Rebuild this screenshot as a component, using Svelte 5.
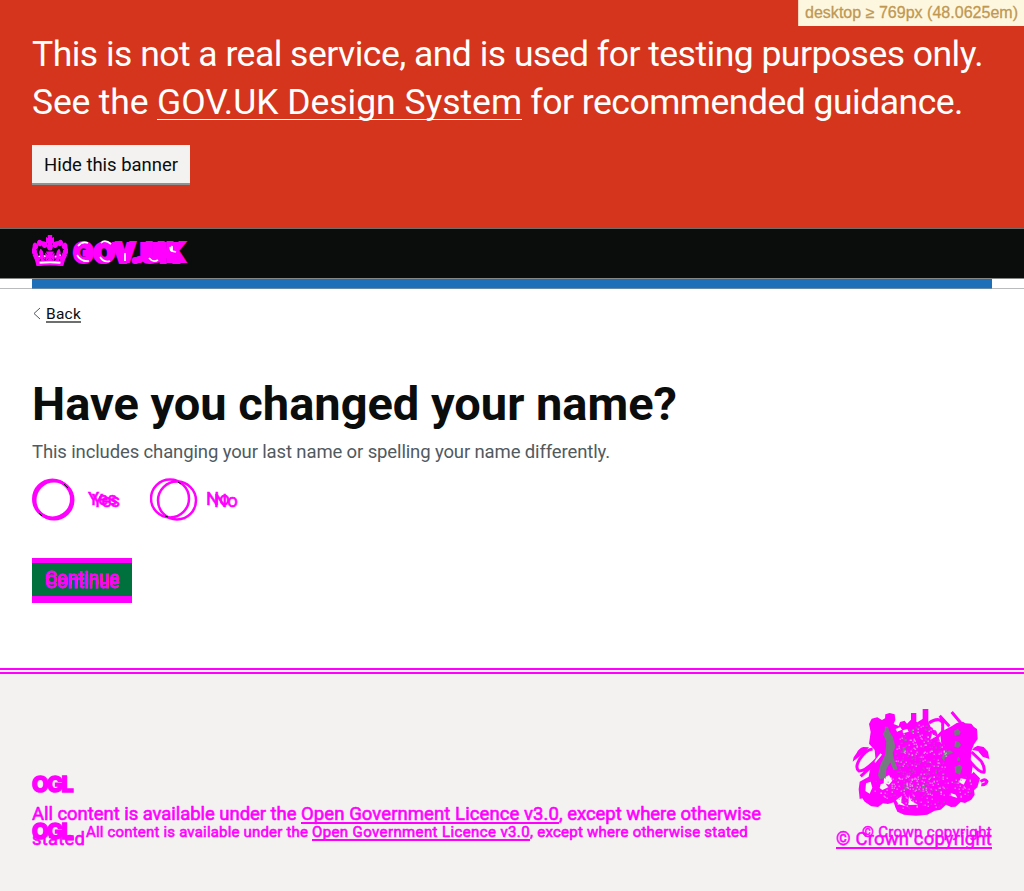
<script>
  // Spreads the remaining space over the letters so that a label fills its width.
  function fit(node, width) {
    node.style.letterSpacing = '0px';
    const natural = node.getBoundingClientRect().width;
    node.style.letterSpacing = (width - natural) / node.textContent.length + 'px';
  }
  const crown = 'M25 30.2c3.5 1.5 7.7-.2 9.1-3.7 1.5-3.6-.2-7.8-3.9-9.2-3.6-1.4-7.6.3-9.1 3.9-1.4 3.5.3 7.5 3.9 9zM9 39.5c3.6 1.5 7.8-.2 9.2-3.7 1.5-3.6-.2-7.8-3.9-9.1-3.6-1.5-7.6.2-9.1 3.8-1.4 3.5.3 7.5 3.8 9zM4.4 57.2c3.5 1.5 7.7-.2 9.1-3.8 1.5-3.6-.2-7.7-3.9-9.1-3.5-1.5-7.6.3-9.1 3.8-1.4 3.5.3 7.6 3.9 9.1zm38.3-21.4c3.5 1.5 7.7-.2 9.1-3.8 1.5-3.6-.2-7.7-3.9-9.1-3.6-1.5-7.6.3-9.1 3.8-1.3 3.6.4 7.7 3.9 9.1zm64.4-5.6c-3.6 1.5-7.8-.2-9.1-3.7-1.5-3.6.2-7.8 3.8-9.2 3.6-1.4 7.7.3 9.2 3.9 1.3 3.5-.4 7.5-3.9 9zm15.9 9.3c-3.6 1.5-7.7-.2-9.1-3.7-1.5-3.6.2-7.8 3.7-9.1 3.6-1.5 7.7.2 9.2 3.8 1.5 3.5-.3 7.5-3.8 9zm4.7 17.7c-3.6 1.5-7.8-.2-9.2-3.8-1.5-3.6.2-7.7 3.9-9.1 3.6-1.5 7.7.3 9.2 3.8 1.3 3.5-.4 7.6-3.9 9.1zM89.3 35.8c-3.6 1.5-7.8-.2-9.2-3.8-1.4-3.6.2-7.7 3.9-9.1 3.6-1.5 7.7.3 9.2 3.8 1.4 3.6-.3 7.7-3.9 9.1zM69.7 17.7l8.9 4.7V9.3l-8.9 2.8c-.2-.3-.5-.6-.9-.9L72.4 0H59.6l3.5 11.2c-.3.3-.6.5-.9.9l-8.8-2.8v13.1l8.8-4.7c.3.3.6.7.9.9l-5 15.4v.1c-.2.8-.4 1.6-.4 2.4 0 4.1 3.1 7.5 7 8.1h.2c.3 0 .7.1 1 .1.4 0 .7 0 1-.1h.2c4-.6 7.1-4.1 7.1-8.1 0-.8-.1-1.7-.4-2.4V34l-5.1-15.4c.4-.2.7-.6 1-.9zM66 92.8c16.9 0 32.8 1.1 47.1 3.2 4-16.9 8.9-26.7 14-33.5l-9.6-3.4c1 4.9 1.1 7.2 0 10.2-1.5-1.4-3-4.3-4.2-8.7L108.6 76c2.8-2 5-3.2 7.5-3.3-4.4 9.4-10 11.9-13.6 11.2-4.3-.8-6.3-4.6-5.6-7.9 1-4.7 5.7-5.9 8-.5 4.3-8.7-3-11.4-7.6-8.8 7.1-7.2 7.9-13.5 2.1-21.1-8 6.1-8.1 12.3-4.5 20.8-4.7-5.4-12.1-2.5-9.5 6.2 3.4-5.2 7.9-2 7.2 3.1-.6 4.3-6.4 7.8-13.5 7.2-10.3-.9-10.9-8-11.2-13.8 2.5-.5 7.1 1.8 11 7.3L80.2 60c-4.1 4.4-8 5.3-12.3 5.4 1.4-4.4 8-11.6 8-11.6H55.5s6.4 7.2 7.9 11.6c-4.2-.1-8-1-12.3-5.4l1.4 16.4c3.9-5.5 8.5-7.7 10.9-7.3-.3 5.8-.9 12.8-11.1 13.8-7.2.6-12.9-2.9-13.5-7.2-.7-5 3.8-8.3 7.1-3.1 2.7-8.7-4.6-11.6-9.4-6.2 3.7-8.5 3.6-14.7-4.6-20.8-5.8 7.6-5 13.9 2.2 21.1-4.7-2.6-11.9.1-7.7 8.8 2.3-5.5 7.1-4.2 8.1.5.7 3.3-1.3 7.1-5.7 7.9-3.5.7-9-1.8-13.5-11.2 2.5.1 4.7 1.3 7.5 3.3l-4.7-15.4c-1.2 4.4-2.7 7.2-4.3 8.7-1.1-3-.9-5.3 0-10.2l-9.5 3.4c5 6.9 9.9 16.7 14 33.5 14.8-2.1 30.8-3.2 47.7-3.2z';
  // Small flecks over the shield of the coat of arms.
  let seed = 11;
  const rnd = () => (seed = (seed * 16807) % 2147483647) / 2147483647;
  const flecks = Array.from({ length: 330 }, () => {
    const a = rnd() * Math.PI * 2, r = Math.sqrt(rnd());
    return { x: Math.round((240 + Math.cos(a) * r * 78) / 3) * 3, y: Math.round((180 + Math.sin(a) * r * 105) / 3) * 3, c: rnd() > .38 ? '#7b8082' : '#f3f2f1' };
  });
  const sideFlecks = Array.from({ length: 230 }, () => ({
    x: Math.round((100 + rnd() * 290) / 3) * 3, y: Math.round((230 + rnd() * 95) / 3) * 3, c: rnd() > .65 ? '#7b8082' : '#f3f2f1'
  })).filter(f => f.y < 295 || (f.x > 170 && f.x < 310));
</script>

<div class="page">
  <div class="badge"><span use:fit={213}>desktop ≥ 769px (48.0625em)</span></div>
  <section class="banner">
    <p><span use:fit={951}>This is not a real service, and is used for testing purposes only.</span></p>
    <p><span use:fit={125}>See the&nbsp;</span><a href="#ds" use:fit={365}>GOV.UK Design System</a><span use:fit={441}>&nbsp;for recommended guidance.</span></p>
    <button class="hide"><span use:fit={134}>Hide this banner</span></button>
  </section>

  <header>
    <svg class="crown" viewBox="0 0 132 97" width="36" height="31" preserveAspectRatio="none">
      <path d={crown} fill="#f0f" stroke="#f0f" stroke-width="4" />
      <path d="M22 26Q43 18 55 36M110 26Q89 18 77 36M9 34Q3 44 8 56M123 34Q129 44 124 56" fill="none" stroke="#f0f" stroke-width="10" />
      <path d={crown} fill="#f0f" stroke="#f0f" stroke-width="4" transform="translate(3 5) scale(.95 .93)" />
      <path d="M22 85q44-4 88 0l-2 8q-42-4-84 0z" fill="#f0f" />
      <path d="M28 87q38-3 76 0" fill="none" stroke="#fff" stroke-width="6" />
      <path d="M24 67h5M44 66h6M84 68h5M101 63h5" stroke="#fff" stroke-width="4" />
    </svg>
    <div class="logo">
      <span class="mark a" use:fit={106}>GOV.UK</span>
      <span class="mark b" use:fit={114}>GOV.UK</span>
      <svg class="glint" width="114" height="30" viewBox="0 0 114 30"><path d="M6 8q4-5 10-3M5 17q4 7 12 6M39 6q-6-5-10-1M28 19q4 6 10 4M53 15v8M77 20q4 5 9 2M98 9l1 4 1-5v5l4 1" fill="none" stroke="#fff" stroke-width="1.700" /></svg>
    </div>
  </header>
  <div class="strip"><div></div></div>

  <main>
    <div class="back"><svg width="9" height="13" viewBox="0 0 9 13"><path d="M8 1L2 6.500 8 12" fill="none" stroke="#505a5f" stroke-width="1" /></svg><a href="#back" use:fit={35}>Back</a></div>
    <h1><span use:fit={645}>Have you changed your name?</span></h1>
    <p class="hint"><span use:fit={578}>This includes changing your last name or spelling your name differently.</span></p>
    <div class="radios">
      <svg width="44" height="46" viewBox="0 0 44 46" fill="none" stroke="#f0f"><circle cx="20.500" cy="22" r="19" stroke-width="3" /><circle cx="22" cy="23" r="19" stroke-width="3" /><path d="M32 7l4 4M7 36l3 3" stroke="#0b0c0c" /></svg>
      <div class="label yes"><span use:fit={29}>Yes</span><span class="shift" use:fit={27}>Yes</span></div>
      <svg width="50" height="46" viewBox="0 0 50 46" fill="none" stroke="#f0f"><circle cx="20" cy="21.500" r="19" stroke-width="2.500" /><circle cx="27" cy="23.500" r="19" stroke-width="2.500" /><path d="M28 5l3 2M15 39l3 1" stroke="#0b0c0c" /></svg>
      <div class="label no"><span use:fit={24}>No</span><span class="shift" use:fit={24}>No</span></div>
    </div>
    <button class="continue"><span class="first" use:fit={74}>Continue</span><span class="ghost" use:fit={74}>Continue</span></button>
  </main>

  <footer>
    <div class="licence">
      <b class="ogl"><span use:fit={40}>OGL</span></b>
      <div class="large"><span use:fit={269}>All content is available under the&nbsp;</span><a href="#ogl" use:fit={258}>Open Government Licence v3.0</a><span use:fit={202}>, except where otherwise</span><br /><span use:fit={53}>stated</span></div>
      <div class="small"><b class="ogl"><span use:fit={40}>OGL</span></b><div><span use:fit={226}>All content is available under the&nbsp;</span><a href="#ogl" use:fit={218}>Open Government Licence v3.0</a><span use:fit={218}>, except where otherwise stated</span></div></div>
    </div>
    <div class="copyright">
      <svg width="140" height="110" viewBox="34 25 420 330">
        <g fill="none" stroke="#f0f" stroke-width="9" stroke-linejoin="round">
          <path d="M108 178Q72 216 55 214Q42 205 56 180Q75 150 96 148M60 230L110 184M384 180Q415 220 430 218Q434 203 421 184L393 157M420 246Q432 235 439 245Q435 257 422 255M297 48L326 80M333 37L363 73M265 70Q292 51 306 68L306 96L286 116" />
        </g>
        <path d="M36 186l3-13 9-13Q54 146 68 142l17 1-10 12-14 12zM446 178l-20-7-14-17-18-3q5-9 17-13l18 4 13 14zM211 73V40h16v33zM246 68V28h17v41z" fill="#f0f" />
        <path d="M85 73L93 57 110 53 124 61 133 56 134 44 147 40 162 44 164 60 159 73 174 79 178 67 192 63 199 72 210 61 230 68 249 56 264 68 270 82 285 88 292 110 302 133 299 106 310 92 334 79 348 70 367 66 374 71 392 72 400 82 409 88 411 118 400 134 393 151 390 180 400 218 418 236 410 263 400 272 402 285 392 300 373 310 360 307 345 321 331 322 316 315 300 330 282 333 260 345 226 348 190 345 170 336 164 323 159 308 142 313 127 311 112 322 92 320 72 306 65 296 57 298 54 269 57 246 84 231 88 210 105 184 102 151 85 132 90 97Z" fill="#f0f" />
        <g fill="#f3f2f1"><path d="M76 251l14-5 5 18-8 18-13-8zM130 235l15-9 10 17-10 12-16-6zM120 254l13-5 10 14-18 8-8-6zM166 302l18-14-3 20 15 12-22-6zM205 288l7 16 20 11-29 1zM360 236l17 3-8 16-14-7zM330 280l15 5 5 10-18-6zM274 73l21-8 7 17-11 12-14-4zM102 184l17-23 5 4-21 26zM287 110l-18 10 5-16zM395 203l6 12-8 8zM165 88l14-6 5 8-15 6zM186 92l14-4 4 8-17 5z" /></g>
        <g fill="#747c80"><path d="M133 81h9l4 14 11 18 7 28-8 18 3 16 12 34-12 3-10-24-12 21-2 25-17 5-6-12 6-29 16-34 3-39-10-22 5-10zM186 142h9v12h-9zM340 93l12-5 8 8-4 10-14 2zM344 124l12 4 5 8-8 9-12-4zM310 158l18-6 9 7-18 8-10 15-5-6zM342 202l15-7 8 7-7 23-14-6zM191 118h7v7h-7zM213 90h4v9h-4zM244 255h9v11h-9zM192 261h9v8h-9zM352 171l6 5-2 9-7-3z" /></g>
        {#each [...flecks, ...sideFlecks] as f}<rect x={f.x} y={f.y} width="3" height="3" fill={f.c} />{/each}
      </svg>
      <div class="copy"><span use:fit={130}>© Crown copyright</span><span class="copylarge" use:fit={156}>© Crown copyright</span></div>
    </div>
  </footer>
</div>

<style>
  :global(body) { margin: 0; background: #fff; }
  * { box-sizing: border-box; }
  p, h1 { margin: 0; }
  span, a { display: inline-block; white-space: nowrap; }
  .page { width: 1024px; height: 891px; overflow: hidden; position: relative; display: flex; flex-direction: column; font-family: Roboto, sans-serif; color: #0b0c0c; }
  .badge { position: absolute; right: 0; top: 0; width: 226px; height: 26px; padding: 0 6px; background: #fef7e0; border-left: 1px solid #f5d5bd; color: #bf9853; font: 16px/26px "Liberation Sans", Arial, sans-serif; -webkit-text-stroke: .3px; }
  .banner { height: 228px; padding: 30px 32px 0; background: #d4351c; color: #fff; font-size: 35.500px; line-height: 48px; }
  .banner p { height: 48px; white-space: nowrap; display: flex; }
  .banner a { color: #fff; height: 42px; border-bottom: 1px solid #fff; text-decoration: none; }
  .hide { display: block; margin-top: 19px; width: 158px; height: 40px; border: 0; padding: 1px 0 0 12px; text-align: left; background: #f3f2f1; border-bottom: 2px solid #929191; font: 18.500px/38px Roboto, sans-serif; color: #0b0c0c; }
  header { height: 51px; background: #0b0c0c; border-top: 1px solid #6c6d6d; border-bottom: 1px solid #858686; padding: 6px 32px; display: flex; gap: 4px; }
  .crown { flex: none; display: block; }
  .logo { position: relative; width: 114px; height: 31px; font: 800 27px/31px "Inter", sans-serif; }
  .mark { position: absolute; left: 1px; top: 3px; color: #f0f; -webkit-text-stroke: 2.200px #f0f; }
  .mark.b { top: 2px; left: 1px; }
  .glint { position: absolute; left: 0; top: 3px; }
  .strip { height: 10px; padding: 0 32px; border-bottom: 1px solid #b9bbbc; }
  .strip div { height: 10px; background: #1d70b8; border-bottom: 1px solid #6689a9; }
  main { height: 379px; padding: 0 32px; }
  .back { display: flex; gap: 5px; padding-top: 18px; font-size: 15.500px; line-height: 18px; height: 38px; }
  .back a { height: 17px; line-height: 17px; border-bottom: 2px solid #6d6e6e; color: #0b0c0c; text-decoration: none; margin-top: -1px; }
  h1 { padding-top: 52px; height: 113px; font-size: 47px; font-weight: 700; line-height: 50px; }
  .hint { font-size: 18.500px; line-height: 24px; color: #505a5f; height: 37px; white-space: nowrap; }
  .radios { display: flex; height: 81px; color: #f0f; font-size: 18.500px; }
  .radios svg { flex: none; }
  .label { position: relative; height: 46px; line-height: 44px; -webkit-text-stroke: .6px #f0f; }
  .yes { width: 74px; padding-left: 12px; }
  .no { padding-left: 6px; }
  .shift { position: absolute; left: 16px; top: 2px; }
  .no .shift { left: 14px; }
  .continue { display: block; position: relative; width: 100px; height: 45px; padding: 0; border: 0; border-top: 5px solid #f0f; border-bottom: 7px solid #f0f; background: #00703c; color: #f0f; font: 18.500px/31px Roboto, sans-serif; -webkit-text-stroke: .8px #f0f; }
  .first { position: relative; top: -1px; }
  .ghost { position: absolute; left: 13px; top: 4px; }
  footer { height: 223px; border-top: 2px solid #f0f; background: #f3f2f1; padding: 0 32px; position: relative; display: flex; justify-content: space-between; }
  footer::before { content: ""; position: absolute; left: 0; right: 0; top: 2px; height: 2px; background: #f0f; }
  .licence { position: relative; width: 740px; padding-top: 102px; color: #f0f; -webkit-text-stroke: .6px #f0f; }
  .ogl { display: block; height: 29px; font: 800 21.500px/24px "Inter", sans-serif; -webkit-text-stroke: 1.500px #f0f; }
  .large { font-size: 18.500px; line-height: 27px; white-space: nowrap; margin-bottom: 0; line-height: 25px; padding-top: 1px; }
  footer a { color: #f0f; height: 22px; border-bottom: 2px solid #f0f; text-decoration: none; }
  .large a { vertical-align: top; }
  .small { position: absolute; left: 0; top: 149px; display: flex; gap: 14px; font-size: 15px; line-height: 26px; white-space: nowrap; }
  .small a { height: 22px; vertical-align: top; }
  .copyright { position: relative; width: 156px; padding-top: 38px; color: #f0f; display: flex; flex-direction: column; align-items: flex-end; -webkit-text-stroke: .5px #f0f; }
  .copyright svg { display: block; }
  .copy { position: relative; width: 156px; text-align: right; font-size: 15px; line-height: 29px; }
  .copylarge { position: absolute; left: 0; top: 7px; height: 24px; font-size: 18.500px; line-height: 29px; border-bottom: 2px solid #f0f; }
</style>
